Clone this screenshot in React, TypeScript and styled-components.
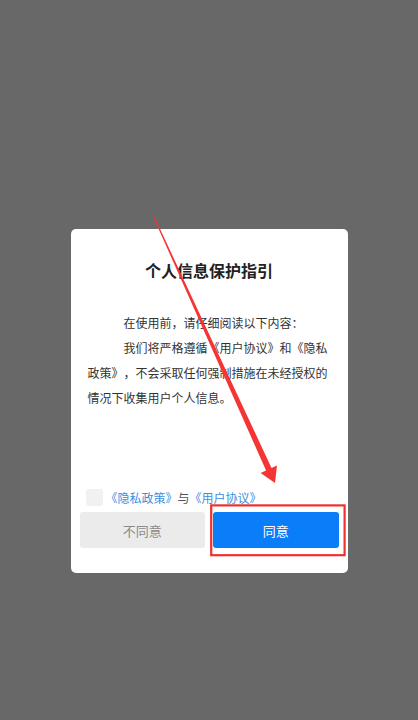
import React, { useState } from "react";
import styled, { createGlobalStyle } from "styled-components";

const GlobalStyle = createGlobalStyle`
  html, body {
    margin: 0;
    padding: 0;
    background: #686868;
  }
  body {
    font-family: "Noto Sans CJK SC", "Noto Sans", sans-serif;
    text-spacing-trim: space-all;
  }
  * {
    box-sizing: border-box;
  }
`;

export default function App() {
  const [checked, setChecked] = useState(false);

  return (
    <Page>
      <GlobalStyle />
      <Dialog>
        <Title>个人信息保护指引</Title>
        <Body>
          <Paragraph>在使用前，请仔细阅读以下内容：</Paragraph>
          <Paragraph>
            我们将严格遵循《用户协议》和《隐私政策》，不会采取任何强制措施在未经授权的情况下收集用户个人信息。
          </Paragraph>
        </Body>
        <AgreeRow>
          <CheckBox
            checked={checked}
            onClick={() => setChecked(!checked)}
            aria-label="同意协议"
          />
          <AgreeText>
            <Link>《隐私政策》</Link>与<Link>《用户协议》</Link>
          </AgreeText>
        </AgreeRow>
        <Buttons>
          <Button variant="cancel">不同意</Button>
          <Button variant="primary">同意</Button>
        </Buttons>
      </Dialog>
      <Annotation viewBox="0 0 418 720" width="418" height="720">
        <polygon
          points="153.46,214.79 271.52,468.11 276.98,465.62 275,483 260.6,473.08 266.06,470.59 152.54,215.21"
          fill="#f53434"
        />
        <rect
          x="211.2"
          y="505.4"
          width="133.4"
          height="49.8"
          fill="none"
          stroke="#f03030"
          strokeWidth="2.2"
        />
      </Annotation>
    </Page>
  );
}

const Page = styled.div`
  min-height: 720px;
  display: flex;
  justify-content: center;
  align-items: flex-start;
  padding-top: 229px;
`;

const Dialog = styled.div`
  width: 277px;
  background: #ffffff;
  border-radius: 5px;
  padding: 30px 0 25px;
  display: flex;
  flex-direction: column;
`;

const Title = styled.h2`
  margin: 0;
  font-size: 16px;
  line-height: 22px;
  font-weight: 700;
  color: #222222;
  text-align: center;
`;

const Body = styled.div`
  margin-top: 29px;
  padding: 0 17px;
  font-size: 12px;
  line-height: 25px;
  color: #333333;
`;

const Paragraph = styled.p`
  margin: 0;
  text-indent: 3em;
`;

const AgreeRow = styled.div`
  margin-top: 79px;
  padding-left: 15px;
  display: flex;
  align-items: center;
  gap: 3px;
  height: 17px;
`;

const CheckBox = styled.button<{ checked: boolean }>`
  width: 17px;
  height: 17px;
  padding: 0;
  border: none;
  border-radius: 3px;
  background: ${({ checked }) => (checked ? "#0a7df8" : "#f1f1f1")};
  cursor: pointer;
`;

const AgreeText = styled.span`
  font-size: 12px;
  line-height: 17px;
  color: #555555;
`;

const Link = styled.span`
  color: #3d8fdc;
`;

const Buttons = styled.div`
  margin-top: 6px;
  padding: 0 9px;
  display: flex;
  gap: 8px;
`;

const Button = styled.button<{ variant: "cancel" | "primary" }>`
  flex: 1;
  height: 36px;
  border: none;
  border-radius: 3px;
  font-family: inherit;
  font-size: 13px;
  background: ${({ variant }) => (variant === "primary" ? "#0a7df8" : "#ebebeb")};
  color: ${({ variant }) => (variant === "primary" ? "#ffffff" : "#8a8a8a")};
  cursor: pointer;
`;

const Annotation = styled.svg`
  position: fixed;
  top: 0;
  left: 0;
  pointer-events: none;
`;
